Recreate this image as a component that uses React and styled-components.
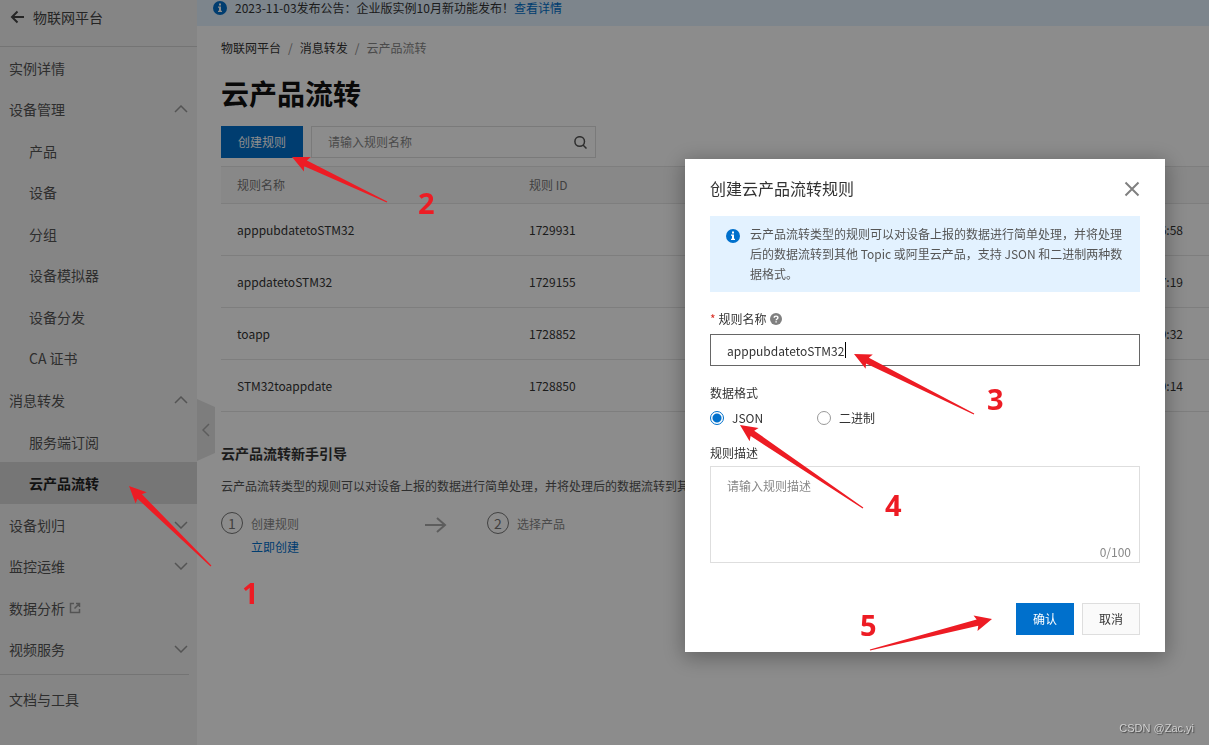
import React, { useState } from "react";
import styled, { createGlobalStyle } from "styled-components";

const GlobalStyle = createGlobalStyle`
  * {
    box-sizing: border-box;
  }
  body {
    margin: 0;
    background-color: #ffffff;
    color: #333333;
    font-family: "Noto Sans CJK SC", sans-serif;
    font-size: 12px;
    line-height: 20px;
  }
  button, input, textarea {
    font: inherit;
    color: inherit;
  }
  ul, ol, h1, h2, p {
    margin: 0;
    padding: 0;
    list-style: none;
  }
  a {
    color: inherit;
    text-decoration: none;
  }
  svg {
    display: block;
    flex: none;
  }
`;

const Page = styled.div`
  display: flex;
  min-height: 100vh;
`;

const Sidebar = styled.nav`
  position: relative;
  flex: none;
  width: 197px;
  background-color: #f3f3f3;
  color: #555555;
  font-size: 14px;
`;

const SideHeader = styled.a`
  display: flex;
  align-items: center;
  gap: 9px;
  height: 47px;
  padding: 0 10px 12px;
  border-bottom: 1px solid #d4d4d4;
  color: #444444;
`;

const SideList = styled.ul`
  display: grid;
  grid-auto-rows: 1fr;
  min-height: 623px;
`;

const SideItem = styled.li`
  display: flex;
  background-color: ${({ $active }) => ($active ? "#d8d8d8" : "transparent")};
  color: ${({ $active }) => ($active ? "#222222" : "inherit")};
  font-weight: ${({ $active }) => ($active ? 700 : 400)};
`;

const SideLink = styled.a`
  flex: 1;
  display: flex;
  align-items: center;
  gap: 4px;
  padding: 0 9px 0 ${({ $child }) => ($child ? "29px" : "9px")};
  svg {
    color: #999999;
  }
`;

const Spacer = styled.span`
  flex: 1;
`;

const SideFooter = styled.div`
  margin-right: 8px;
  padding: 14px 9px;
  border-top: 1px solid #d4d4d4;
  margin-top: 4px;
`;

const CollapseButton = styled.button`
  position: absolute;
  left: 100%;
  top: 399px;
  display: flex;
  align-items: center;
  justify-content: center;
  width: 18px;
  height: 62px;
  padding: 0;
  border: 0;
  background-color: #e4e4e4;
  clip-path: polygon(0 0, 100% 8px, 100% 54px, 0 100%);
  color: #aaaaaa;
`;

const Main = styled.main`
  flex: 1;
  min-width: 0;
  overflow: hidden;
`;

const Banner = styled.div`
  display: flex;
  gap: 8px;
  height: 26px;
  padding: 0 16px 10px;
  align-items: center;
  background-color: #e3f2ff;
  white-space: nowrap;
`;

const TextLink = styled.a`
  color: #0070cc;
`;

const Content = styled.div`
  padding-left: 24px;
`;

const Breadcrumb = styled.ol`
  display: flex;
  gap: 7px;
  padding-top: 12px;
  color: #888888;
`;

const Crumb = styled.a`
  color: #333333;
`;

const Title = styled.h1`
  margin-top: 15px;
  color: #111111;
  font-size: 28px;
  line-height: 40px;
`;

const Toolbar = styled.div`
  display: flex;
  gap: 8px;
  margin: 13px 0 8px;
`;

const Button = styled.button`
  height: 32px;
  padding: 0 16px;
  border: 1px solid ${({ $primary }) => ($primary ? "#0070cc" : "#dedede")};
  background-color: ${({ $primary }) => ($primary ? "#0070cc" : "#fafafa")};
  color: ${({ $primary }) => ($primary ? "#ffffff" : "#333333")};
`;

const SearchBox = styled.label`
  display: flex;
  align-items: center;
  width: 285px;
  height: 32px;
  padding: 0 8px 0 16px;
  border: 1px solid #dedede;
  color: #555555;
`;

const SearchInput = styled.input`
  flex: 1;
  min-width: 0;
  padding: 0;
  border: 0;
  outline: 0;
  background: none;
  &::placeholder {
    color: #888888;
    opacity: 1;
  }
`;

const Table = styled.table`
  width: 100%;
  table-layout: fixed;
  border-collapse: collapse;
`;

const HeadCell = styled.th`
  width: ${({ $width }) => $width || "auto"};
  height: 37px;
  padding: 0 16px;
  border: solid #e5e5e5;
  border-width: 1px 0;
  background-color: #f7f7f7;
  color: #777777;
  font-weight: 400;
  text-align: left;
`;

const Cell = styled.td`
  height: 52px;
  padding: 0 26px 0 16px;
  border-bottom: 1px solid #e5e5e5;
  text-align: ${({ $align }) => $align || "left"};
`;

const GuideTitle = styled.h2`
  margin-top: 31px;
  font-size: 14px;
`;

const GuideText = styled.p`
  margin-top: 13px;
  color: #555555;
  white-space: nowrap;
`;

const Steps = styled.ol`
  display: flex;
  gap: 40px;
  margin-top: 16px;
  color: #888888;
`;

const Step = styled.li`
  display: flex;
  gap: 8px;
  min-width: 164px;
`;

const StepNumber = styled.span`
  display: flex;
  align-items: center;
  justify-content: center;
  width: 22px;
  height: 22px;
  border: 1px solid #777777;
  border-radius: 50%;
  color: #777777;
  font-size: 14px;
`;

const StepBody = styled.div`
  display: flex;
  flex-direction: column;
  gap: 3px;
  padding-top: 2px;
`;

const StepArrow = styled.li`
  padding-top: 5px;
  color: #aaaaaa;
`;

const Overlay = styled.div`
  position: fixed;
  inset: 0;
  display: flex;
  align-items: flex-start;
  justify-content: flex-end;
  padding: 159px 44px 0;
  background-color: rgba(0, 0, 0, 0.45);
`;

const Modal = styled.form`
  width: 480px;
  padding: 17px 25px;
  background-color: #ffffff;
  box-shadow: 0 4px 20px 2px rgba(0, 0, 0, 0.3);
`;

const ModalHeader = styled.header`
  display: flex;
  align-items: center;
  justify-content: space-between;
  height: 24px;
  margin-bottom: 16px;
`;

const ModalTitle = styled.h2`
  font-size: 16px;
  font-weight: 400;
  line-height: 24px;
`;

const CloseButton = styled.button`
  padding: 2px 0 0;
  border: 0;
  background: none;
  color: #808080;
`;

const Notice = styled.div`
  display: flex;
  gap: 10px;
  padding: 8px 16px;
  background-color: #e3f2ff;
  color: #555555;
  svg {
    margin-top: 5px;
  }
`;

const FieldLabel = styled.label`
  display: flex;
  align-items: center;
  gap: 3px;
  margin-top: ${({ $gap }) => $gap || "17px"};
`;

const Required = styled.span`
  color: #d93026;
`;

/* the text cursor is painted as a background right after the rule name */
const NameInput = styled.input`
  display: block;
  width: 100%;
  height: 32px;
  margin-top: 5px;
  padding: 0 16px;
  border: 1px solid #666666;
  border-radius: 0;
  outline: 0;
  background: linear-gradient(#000000, #000000) no-repeat 134px center / 1px
    16px;
`;

const Fieldset = styled.fieldset`
  margin: 17px 0 0;
  padding: 0;
  border: 0;
`;

const Legend = styled.legend`
  padding: 0;
`;

const RadioRow = styled.div`
  display: grid;
  grid-template-columns: 107px auto;
  margin-top: 5px;
`;

const RadioLabel = styled.label`
  display: flex;
  align-items: center;
  gap: 8px;
`;

const Radio = styled.input`
  appearance: none;
  flex: none;
  width: 14px;
  height: 14px;
  margin: 0;
  border: 1px solid #999999;
  border-radius: 50%;
  &:checked {
    border-color: #0070cc;
    background: radial-gradient(#0070cc 4px, transparent 5px);
  }
`;

const AreaBox = styled.div`
  display: flex;
  flex-direction: column;
  margin-top: 3px;
  border: 1px solid #dedede;
`;

const Area = styled.textarea`
  height: 75px;
  padding: 9px 16px 0;
  border: 0;
  outline: 0;
  resize: none;
  background: none;
  &::placeholder {
    color: #888888;
    opacity: 1;
  }
`;

const Counter = styled.span`
  padding-right: 8px;
  color: #888888;
  text-align: right;
`;

const ModalFooter = styled.footer`
  display: flex;
  justify-content: flex-end;
  gap: 8px;
  margin-top: 40px;
`;

const Annotations = styled.svg`
  position: fixed;
  inset: 0;
  width: 100%;
  height: 100%;
  pointer-events: none;
  fill: #ed1c24;
  font-family: "Open Sans", sans-serif;
  font-size: 29px;
  font-weight: 700;
`;

const Watermark = styled.div`
  position: fixed;
  right: 15px;
  bottom: 7px;
  color: #d0d0d0;
  font-family: "Liberation Sans", sans-serif;
  font-size: 11px;
  text-shadow: 1px 1px 1px #444444;
`;

const sideItems = [
  { name: "实例详情" },
  { name: "设备管理", icon: "up" },
  { name: "产品", child: true },
  { name: "设备", child: true },
  { name: "分组", child: true },
  { name: "设备模拟器", child: true },
  { name: "设备分发", child: true },
  { name: "CA 证书", child: true },
  { name: "消息转发", icon: "up" },
  { name: "服务端订阅", child: true },
  { name: "云产品流转", child: true, active: true },
  { name: "设备划归", icon: "down" },
  { name: "监控运维", icon: "down" },
  { name: "数据分析", external: true },
  { name: "视频服务", icon: "down" },
];

const rules = [
  { name: "apppubdatetoSTM32", id: "1729931", time: "16:58" },
  { name: "appdatetoSTM32", id: "1729155", time: "17:19" },
  { name: "toapp", id: "1728852", time: "19:32" },
  { name: "STM32toappdate", id: "1728850", time: "19:14" },
];

const marks = [
  { n: 1, tip: [129, 486], tail: [211, 566], text: [242, 604] },
  { n: 2, tip: [292, 157], tail: [387, 202], text: [418, 214] },
  { n: 3, tip: [854, 354], tail: [974, 414], text: [987, 410] },
  { n: 4, tip: [740, 425], tail: [863, 508], text: [885, 516] },
  { n: 5, tip: [992, 619], tail: [870, 650], text: [860, 636] },
];

// tapered arrow: wide head at the tip, shaft narrowing towards the tail
function arrowPoints([x, y], [tx, ty]) {
  const len = Math.hypot(tx - x, ty - y);
  const ux = (tx - x) / len;
  const uy = (ty - y) / len;
  return [
    [0, 0],
    [17, -8],
    [15, -3.2],
    [len, -0.6],
    [len, 0.6],
    [15, 3.2],
    [17, 8],
  ]
    .map(([a, b]) => `${x + ux * a - uy * b},${y + uy * a + ux * b}`)
    .join(" ");
}

function Line({ d, w, h, stroke = 1.5 }) {
  return (
    <svg
      width={w}
      height={h}
      viewBox={`0 0 ${w} ${h}`}
      fill="none"
      stroke="currentColor"
      strokeWidth={stroke}
      aria-hidden="true"
    >
      <path d={d} />
    </svg>
  );
}

function InfoIcon() {
  return (
    <svg width="14" height="14" viewBox="0 0 14 14" aria-hidden="true">
      <circle cx="7" cy="7" r="7" fill="#0070cc" />
      <path
        d="M6 2.6h2v1.8H6zM5 5.6h3v4.2h1v1.2H5V9.8h1V6.8H5z"
        fill="#ffffff"
      />
    </svg>
  );
}

function HelpIcon() {
  return (
    <svg width="12" height="12" viewBox="0 0 12 12" aria-hidden="true">
      <circle cx="6" cy="6" r="6" fill="#808080" />
      <path
        d="M4.2 4.8c0-2.3 3.7-2.3 3.7 0 0 1.2-1.8 1.2-1.8 2.5"
        fill="none"
        stroke="#ffffff"
        strokeWidth="1.4"
      />
      <path d="M5.4 8.2h1.4v1.4H5.4z" fill="#ffffff" />
    </svg>
  );
}

const chevrons = {
  up: "M1 7L7 1L13 7",
  down: "M1 1L7 7L13 1",
};

function SideMenu() {
  return (
    <Sidebar>
      <SideHeader href="#">
        <Line w={14} h={14} stroke={2} d="M14 7H2M7.5 1.5L2 7l5.5 5.5" />
        物联网平台
      </SideHeader>
      <SideList>
        {sideItems.map(({ name, icon, child, active, external }) => (
          <SideItem key={name} $active={active}>
            <SideLink href="#" $child={child}>
              {name}
              {external && (
                <Line
                  w={12}
                  h={12}
                  d="M5 1.5H1.5v9h9V7M7 1.5h3.5V5M10.5 1.5L5.5 6.5"
                />
              )}
              {icon && <Spacer />}
              {icon && <Line w={14} h={8} d={chevrons[icon]} />}
            </SideLink>
          </SideItem>
        ))}
      </SideList>
      <SideFooter>
        <a href="#">文档与工具</a>
      </SideFooter>
      <CollapseButton aria-label="收起">
        <Line w={8} h={14} d="M7 1L1 7L7 13" />
      </CollapseButton>
    </Sidebar>
  );
}

function RuleTable() {
  return (
    <Table>
      <thead>
        <tr>
          <HeadCell $width="292px">规则名称</HeadCell>
          <HeadCell>规则 ID</HeadCell>
          <HeadCell $width="200px">创建时间</HeadCell>
        </tr>
      </thead>
      <tbody>
        {rules.map(({ name, id, time }) => (
          <tr key={id}>
            <Cell>{name}</Cell>
            <Cell>{id}</Cell>
            <Cell $align="right">{time}</Cell>
          </tr>
        ))}
      </tbody>
    </Table>
  );
}

function CreateRuleModal() {
  const [name, setName] = useState("apppubdatetoSTM32");
  const [desc, setDesc] = useState("");
  return (
    <Modal
      role="dialog"
      aria-labelledby="modal-title"
      onSubmit={(e) => e.preventDefault()}
    >
      <ModalHeader>
        <ModalTitle id="modal-title">创建云产品流转规则</ModalTitle>
        <CloseButton type="button" aria-label="关闭">
          <Line w={16} h={16} stroke={2} d="M1.5 1.5l13 13M14.5 1.5l-13 13" />
        </CloseButton>
      </ModalHeader>
      <Notice>
        <InfoIcon />
        <p>
          云产品流转类型的规则可以对设备上报的数据进行简单处理，并将处理后的数据流转到其他
          Topic 或阿里云产品，支持 JSON 和二进制两种数据格式。
        </p>
      </Notice>
      <FieldLabel htmlFor="rule-name">
        <Required>*</Required>
        规则名称
        <HelpIcon />
      </FieldLabel>
      <NameInput
        id="rule-name"
        value={name}
        onChange={(e) => setName(e.target.value)}
      />
      <Fieldset>
        <Legend>数据格式</Legend>
        <RadioRow>
          <RadioLabel>
            <Radio type="radio" name="format" defaultChecked />
            JSON
          </RadioLabel>
          <RadioLabel>
            <Radio type="radio" name="format" />
            二进制
          </RadioLabel>
        </RadioRow>
      </Fieldset>
      <FieldLabel htmlFor="rule-desc" $gap="15px">
        规则描述
      </FieldLabel>
      <AreaBox>
        <Area
          id="rule-desc"
          placeholder="请输入规则描述"
          maxLength={100}
          value={desc}
          onChange={(e) => setDesc(e.target.value)}
        />
        <Counter>{desc.length}/100</Counter>
      </AreaBox>
      <ModalFooter>
        <Button $primary>确认</Button>
        <Button type="button">取消</Button>
      </ModalFooter>
    </Modal>
  );
}

function App() {
  return (
    <>
      <GlobalStyle />
      <Page>
        <SideMenu />
        <Main>
          <Banner>
            <InfoIcon />
            <span>
              2023-11-03发布公告：企业版实例10月新功能发布！
              <TextLink href="#">查看详情</TextLink>
            </span>
          </Banner>
          <Content>
            <Breadcrumb>
              <li>
                <Crumb href="#">物联网平台</Crumb>
              </li>
              <li>/</li>
              <li>
                <Crumb href="#">消息转发</Crumb>
              </li>
              <li>/</li>
              <li>云产品流转</li>
            </Breadcrumb>
            <Title>云产品流转</Title>
            <Toolbar>
              <Button $primary>创建规则</Button>
              <SearchBox>
                <SearchInput
                  type="text"
                  aria-label="规则名称"
                  placeholder="请输入规则名称"
                />
                <Line
                  w={13}
                  h={13}
                  d="M10.5 5.5a4.8 4.8 0 1 1-9.6 0a4.8 4.8 0 1 1 9.6 0M9 9l3.5 3.5"
                />
              </SearchBox>
            </Toolbar>
            <RuleTable />
            <GuideTitle>云产品流转新手引导</GuideTitle>
            <GuideText>
              云产品流转类型的规则可以对设备上报的数据进行简单处理，并将处理后的数据流转到其他
              Topic 或阿里云产品。
            </GuideText>
            <Steps>
              <Step>
                <StepNumber>1</StepNumber>
                <StepBody>
                  <span>创建规则</span>
                  <TextLink href="#">立即创建</TextLink>
                </StepBody>
              </Step>
              <StepArrow>
                <Line w={22} h={16} stroke={2} d="M0 8H20M12 1l8 7l-8 7" />
              </StepArrow>
              <Step>
                <StepNumber>2</StepNumber>
                <StepBody>
                  <span>选择产品</span>
                </StepBody>
              </Step>
            </Steps>
          </Content>
        </Main>
      </Page>
      <Overlay>
        <CreateRuleModal />
      </Overlay>
      <Annotations>
        {marks.map(({ n, tip, tail, text }) => (
          <g key={n}>
            <polygon points={arrowPoints(tip, tail)} />
            <text x={text[0]} y={text[1]}>
              {n}
            </text>
          </g>
        ))}
      </Annotations>
      <Watermark>CSDN @Zac.yi</Watermark>
    </>
  );
}

export default App;
